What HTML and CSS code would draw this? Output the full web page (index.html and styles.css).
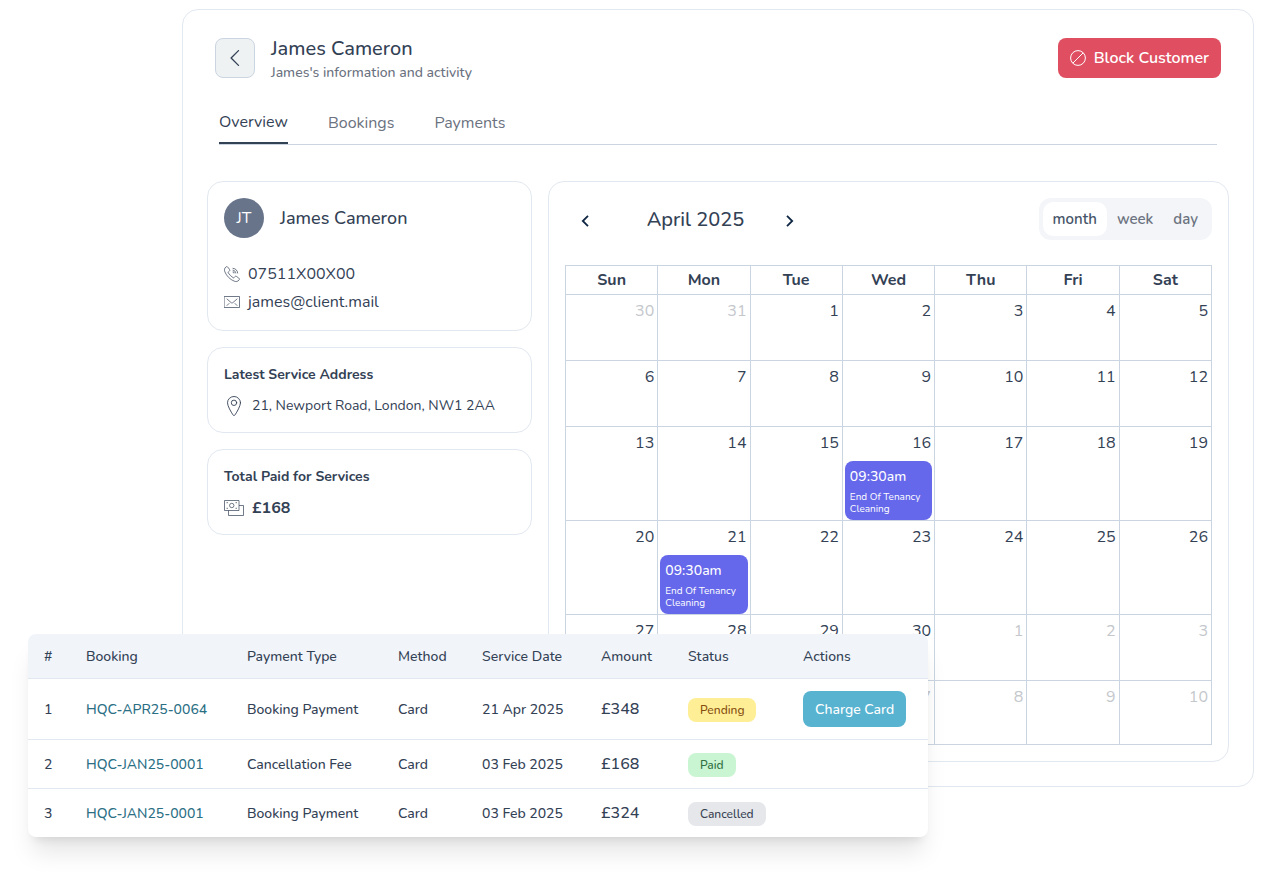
FILE: index.html
```html
<!DOCTYPE html>
<html lang="en">
<head>
  <meta charset="UTF-8">
  <meta name="viewport" content="width=device-width, initial-scale=1.0">
  <title>James Cameron - Customer</title>
  <link rel="stylesheet" href="styles.css">
</head>
<body>
  <main class="panel">
    <header class="panel-header">
      <button type="button" class="back-btn" aria-label="Back">
        <svg width="16" height="16" viewBox="0 0 16 16" fill="none" stroke="currentColor" stroke-width="1.3" stroke-linecap="round" stroke-linejoin="round"><path d="M11.500 .6 4.100 8l7.400 7.400"/></svg>
      </button>
      <div class="heading">
        <h1>James Cameron</h1>
        <p>James's information and activity</p>
      </div>
      <button type="button" class="block-btn">
        <svg width="16" height="16" viewBox="0 0 16 16" fill="none" stroke="currentColor" stroke-width="1"><circle cx="8" cy="8" r="7.400"/><path d="M2.800 13.200 13.200 2.800"/></svg>
        Block Customer
      </button>
    </header>

    <nav class="tabs">
      <a href="#overview" class="tab active">Overview</a>
      <a href="#bookings" class="tab">Bookings</a>
      <a href="#payments" class="tab">Payments</a>
    </nav>

    <div class="content">
      <aside class="sidebar">
        <section class="card">
          <div class="person">
            <span class="avatar">JT</span>
            <h2>James Cameron</h2>
          </div>
          <ul class="contact">
            <li>
              <svg width="16" height="16" viewBox="0 0 16 16" fill="none" stroke="currentColor" stroke-width=".7" stroke-linecap="round" stroke-linejoin="round"><path d="M3.900 1.200c-.6-.8-1.300-.8-2-.2C.4 2.300.1 3.900.9 5.900c1.600 4 5.200 7.600 9.200 9.200 2 .8 3.600.5 4.900-1 .6-.7.6-1.400-.2-2l-2.200-1.600c-.7-.5-1.300-.4-1.800.2l-.7.9c-.3.3-.6.4-1 .1-1.900-1.200-3.600-2.900-4.800-4.800-.3-.4-.2-.7.1-1l.9-.7c.6-.5.7-1.100.2-1.800z"/><path d="M9 2.300c2.600.2 4.500 2.100 4.700 4.700M9 4.200c1.600.2 2.600 1.200 2.800 2.800M9 6h1v1"/></svg>
              07511X00X00
            </li>
            <li>
              <svg width="16" height="16" viewBox="0 0 16 16" fill="none" stroke="currentColor" stroke-width=".7" stroke-linecap="round" stroke-linejoin="round"><path d="M.5 2.500h15v11H.5zM3 5l4 3.500c.7.600 1.300.600 2 0L13 5M3 11.500l2-2M13 11.500l-2-2"/></svg>
              james@client.mail
            </li>
          </ul>
        </section>

        <section class="card info">
          <h3>Latest Service Address</h3>
          <p>
            <svg width="20" height="20" viewBox="0 0 20 20" fill="none" stroke="currentColor" stroke-width=".9" stroke-linecap="round" stroke-linejoin="round"><path d="M16.500 6.800c0 3.200-3.600 9.200-5.400 12-.6.900-1.600.9-2.200 0-1.800-2.800-5.400-8.800-5.400-12a6.500 6.300 0 0 1 13 0z"/><circle cx="10" cy="6.800" r="2.700"/></svg>
            21, Newport Road, London, NW1 2AA
          </p>
        </section>

        <section class="card info">
          <h3>Total Paid for Services</h3>
          <p class="total">
            <svg width="20" height="20" viewBox="0 0 20 20" fill="none" stroke="currentColor" stroke-width=".7" stroke-linejoin="round"><path d="M.5 2.500h14.500v10H.5zM15 7.500h4.500v10h-15v-5"/><circle cx="7.750" cy="7.500" r="2.200"/><path d="M2.500 4.700h1.500M11.500 4.700H13M2.500 10.300h1.500M11.500 10.300H13"/></svg>
            £168
          </p>
        </section>
      </aside>

      <section class="card calendar">
        <div class="toolbar">
          <button type="button" class="arrow" aria-label="Previous month">
            <svg width="8" height="12" viewBox="0 0 8 12" fill="none" stroke="currentColor" stroke-width="1.800"><path d="M7 .8 1.800 6 7 11.200"/></svg>
          </button>
          <h2>April 2025</h2>
          <button type="button" class="arrow" aria-label="Next month">
            <svg width="8" height="12" viewBox="0 0 8 12" fill="none" stroke="currentColor" stroke-width="1.800"><path d="M1 .8 6.200 6 1 11.200"/></svg>
          </button>
          <div class="views">
            <button type="button" class="view active">month</button>
            <button type="button" class="view">week</button>
            <button type="button" class="view">day</button>
          </div>
        </div>

        <table class="month">
          <thead>
            <tr><th>Sun</th><th>Mon</th><th>Tue</th><th>Wed</th><th>Thu</th><th>Fri</th><th>Sat</th></tr>
          </thead>
          <tbody>
            <tr><td class="other">30</td><td class="other">31</td><td>1</td><td>2</td><td>3</td><td>4</td><td>5</td></tr>
            <tr><td>6</td><td>7</td><td>8</td><td>9</td><td>10</td><td>11</td><td>12</td></tr>
            <tr>
              <td>13</td><td>14</td><td>15</td>
              <td>16
                <div class="event"><strong>09:30am</strong><span>End Of Tenancy Cleaning</span></div>
              </td>
              <td>17</td><td>18</td><td>19</td>
            </tr>
            <tr>
              <td>20</td>
              <td>21
                <div class="event"><strong>09:30am</strong><span>End Of Tenancy Cleaning</span></div>
              </td>
              <td>22</td><td>23</td><td>24</td><td>25</td><td>26</td>
            </tr>
            <tr><td>27</td><td>28</td><td>29</td><td>30</td><td class="other">1</td><td class="other">2</td><td class="other">3</td></tr>
            <tr><td class="other">4</td><td class="other">5</td><td class="other">6</td><td class="other">7</td><td class="other">8</td><td class="other">9</td><td class="other">10</td></tr>
          </tbody>
        </table>
      </section>
    </div>
  </main>

  <!-- Payments, floating over the panel -->
  <section class="payments">
    <table>
      <colgroup>
        <col class="col-num"><col class="col-booking"><col class="col-type"><col class="col-method">
        <col class="col-date"><col class="col-amount"><col class="col-status"><col>
      </colgroup>
      <thead>
        <tr>
          <th>#</th>
          <th>Booking</th>
          <th>Payment Type</th>
          <th>Method</th>
          <th>Service Date</th>
          <th>Amount</th>
          <th>Status</th>
          <th>Actions</th>
        </tr>
      </thead>
      <tbody>
        <tr>
          <td>1</td>
          <td><a href="#HQC-APR25-0064">HQC-APR25-0064</a></td>
          <td>Booking Payment</td>
          <td>Card</td>
          <td>21 Apr 2025</td>
          <td class="amount">£348</td>
          <td><span class="badge pending">Pending</span></td>
          <td class="action"><button type="button" class="charge-btn">Charge Card</button></td>
        </tr>
        <tr>
          <td>2</td>
          <td><a href="#HQC-JAN25-0001">HQC-JAN25-0001</a></td>
          <td>Cancellation Fee</td>
          <td>Card</td>
          <td>03 Feb 2025</td>
          <td class="amount">£168</td>
          <td><span class="badge paid">Paid</span></td>
          <td></td>
        </tr>
        <tr>
          <td>3</td>
          <td><a href="#HQC-JAN25-0001">HQC-JAN25-0001</a></td>
          <td>Booking Payment</td>
          <td>Card</td>
          <td>03 Feb 2025</td>
          <td class="amount">£324</td>
          <td><span class="badge cancelled">Cancelled</span></td>
          <td></td>
        </tr>
      </tbody>
    </table>
  </section>
</body>
</html>
```

FILE: styles.css
```css
* {
  box-sizing: border-box;
}

body {
  position: relative;
  margin: 0;
  padding: 9px 12px 85px 182px;
  background: #fff;
  color: #334155;
  font-family: 'Nunito', 'Open Sans', sans-serif;
  font-size: 16px;
  line-height: 24px;
}

h1, h2, h3, p, ul {
  margin: 0;
  padding: 0;
}

button {
  font: inherit;
  border: 0;
  padding: 0;
  background: none;
  color: inherit;
  cursor: pointer;
}

svg {
  flex: none;
}

.panel {
  border: 1px solid #e2e8f0;
  border-radius: 16px;
  padding: 24px;
}

/* Header */
.panel-header {
  display: flex;
  align-items: center;
  gap: 16px;
  height: 48px;
  padding: 0 8px;
}

.back-btn {
  display: flex;
  align-items: center;
  justify-content: center;
  width: 40px;
  height: 40px;
  border: 1px solid #cbd5e1;
  border-radius: 8px;
  background: #eef2f3;
}

.heading {
  flex: 1;
  padding-top: 2px;
}

.heading h1 {
  font-size: 20px;
  font-weight: 500;
  line-height: 28px;
}

.heading p {
  font-size: 14px;
  font-weight: 500;
  line-height: 20px;
  color: #6b7280;
}

.block-btn {
  display: flex;
  align-items: center;
  gap: 8px;
  height: 40px;
  padding: 0 12px;
  border-radius: 8px;
  background: #df4f61;
  color: #fff;
  font-weight: 600;
}

/* Tabs */
.tabs {
  display: flex;
  gap: 40px;
  height: 47px;
  margin: 16px 12px 36px;
  border-bottom: 1px solid #cbd5e1;
}

.tab {
  height: 46px;
  padding-top: 13px;
  color: #6b7280;
  text-decoration: none;
}

.tab.active {
  padding-top: 12px;
  border-bottom: 2px solid #334155;
  color: #334155;
}

/* Content */
.content {
  display: grid;
  grid-template-columns: 325px 1fr;
  gap: 16px;
}

.card {
  border: 1px solid #e2e8f0;
  border-radius: 16px;
  padding: 16px;
}

.sidebar {
  display: flex;
  flex-direction: column;
  gap: 16px;
}

.person {
  display: flex;
  align-items: center;
  gap: 16px;
}

.person h2 {
  font-size: 18px;
  font-weight: 500;
}

.avatar {
  display: flex;
  align-items: center;
  justify-content: center;
  width: 40px;
  height: 40px;
  border-radius: 50%;
  background: #67748a;
  color: #fff;
}

.contact {
  display: flex;
  flex-direction: column;
  gap: 4px;
  margin-top: 24px;
  list-style: none;
}

.contact li {
  display: flex;
  align-items: center;
  gap: 8px;
}

.info {
  padding-bottom: 14px;
  font-size: 14px;
}

.info h3 {
  margin-bottom: 8px;
  font-size: 14px;
  font-weight: 700;
  line-height: 22px;
}

.info p {
  display: flex;
  align-items: center;
  gap: 8px;
}

.info .total {
  font-size: 16px;
  font-weight: 700;
}

/* Calendar */
.toolbar {
  display: flex;
  align-items: center;
  margin-bottom: 25px;
}

.toolbar h2 {
  width: 149px;
  margin-left: 16px;
  padding-top: 2px;
  font-size: 20px;
  font-weight: 500;
  text-align: center;
}

.arrow {
  display: flex;
  align-items: center;
  justify-content: center;
  width: 40px;
  height: 40px;
  padding-top: 3px;
  color: #0f2744;
}

.views {
  display: flex;
  margin-left: auto;
  padding: 4px;
  border-radius: 12px;
  background: #f3f5f8;
}

.view {
  height: 34px;
  padding: 0 10px;
  border-radius: 10px;
  color: #6b7280;
  font-size: 15px;
  font-weight: 600;
}

.view.active {
  background: #fff;
  color: #475569;
}

.month {
  width: 100%;
  border-collapse: collapse;
  table-layout: fixed;
}

.month th,
.month td {
  border: 1px solid #cbd5e1;
}

.month th {
  height: 29px;
  padding: 0;
  font-weight: 700;
}

.month td {
  height: 66px;
  padding: 4px 3px 0 2px;
  text-align: right;
  vertical-align: top;
}

.month tr:last-child td {
  height: 64px;
}

.month td.other {
  color: #c4c7cc;
}

.event {
  display: flex;
  flex-direction: column;
  gap: 2px;
  height: 59px;
  margin: 6px -1px 0 0;
  padding: 4px 5px;
  border-radius: 8px;
  background: #6568ea;
  color: #fff;
  font-size: 10px;
  line-height: 12px;
  text-align: left;
}

.event strong {
  font-size: 14px;
  font-weight: 500;
  line-height: 24px;
}

/* Payments */
.payments {
  position: absolute;
  top: 634px;
  left: 28px;
  width: 900px;
  overflow: hidden;
  border-radius: 8px;
  background: #fff;
  box-shadow: 0 20px 25px -5px rgba(0, 0, 0, 0.1), 0 8px 10px -6px rgba(0, 0, 0, 0.1);
  font-size: 14px;
  line-height: 20px;
}

.payments table {
  width: 100%;
  border-collapse: collapse;
  table-layout: fixed;
}

.payments th,
.payments td {
  padding: 13px 0 11px 16px;
  text-align: left;
  font-weight: 500;
  white-space: nowrap;
}

.payments thead {
  background: #f1f5fa;
}

.payments tr {
  border-bottom: 1px solid #e2e8f0;
}

.payments tbody tr:last-child {
  border-bottom: 0;
}

.payments a {
  color: #2b6f85;
  text-decoration: none;
}

.payments .amount,
.payments .action {
  padding-top: 12px;
  padding-bottom: 12px;
}

.payments .amount {
  font-size: 16px;
  line-height: 24px;
}

.col-num { width: 42px; }
.col-booking { width: 161px; }
.col-type { width: 151px; }
.col-method { width: 84px; }
.col-date { width: 119px; }
.col-amount { width: 87px; }
.col-status { width: 115px; }

.badge {
  display: block;
  width: fit-content;
  padding: 2px 12px;
  border-radius: 8px;
  font-size: 12px;
}

.pending {
  background: #feef97;
  color: #854d0e;
}

.paid {
  background: #c9f5d3;
  color: #2f7040;
}

.cancelled {
  background: #e5e7eb;
  color: #374151;
}

.charge-btn {
  display: block;
  height: 36px;
  padding: 2px 12px 0;
  border-radius: 8px;
  background: #57b3d0;
  color: #fff;
}
```
